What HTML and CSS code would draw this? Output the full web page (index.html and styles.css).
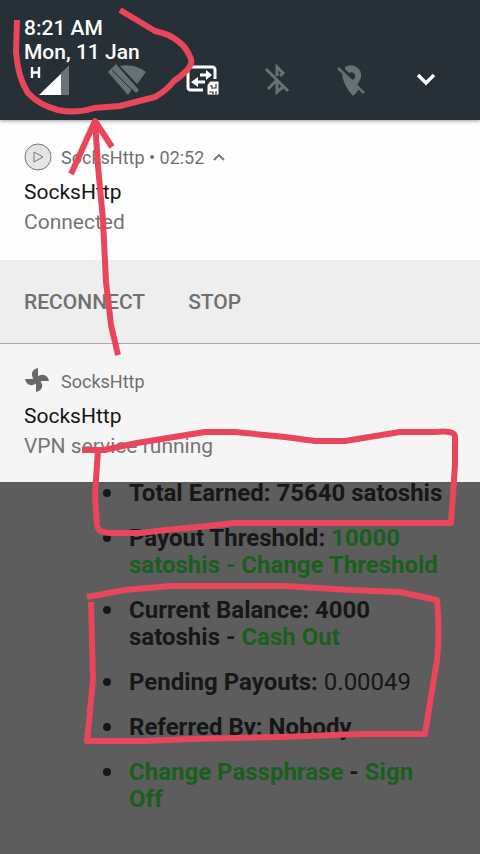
FILE: index.html
```html
<!DOCTYPE html>
<html lang="en">
<head>
<meta charset="utf-8">
<meta name="viewport" content="width=device-width, initial-scale=1">
<title>Notifications</title>
<link rel="stylesheet" href="styles.css">
</head>
<body>
<div class="screen">
  <div class="shade">
    <header class="status">
      <div class="clock">8:21 AM</div>
      <div class="clock">Mon, 11 Jan</div>
      <div class="tiles">
        <button class="tile" aria-label="Mobile signal">
          <svg viewBox="0 0 40 32"><path d="M5 31 35 2V31z" fill="#fff"/><path d="M27 9 35 2V31h-8z" fill="#6c7276"/><path d="M-2 3v11M5 3v11M-2 8.500h7" stroke="#fff" stroke-width="2.4"/></svg>
        </button>
        <button class="tile" aria-label="Wi-Fi off">
          <svg viewBox="0 0 40 32"><path d="M12 2Q26-1 38 8L29 20zM0 8 8 0 31 26 28 29 24 25 20 31z" fill="#667075"/><path d="M4 6 25 27" stroke="#263036" stroke-width="1"/></svg>
        </button>
        <button class="tile" aria-label="Mobile data">
          <svg viewBox="0 0 40 32" fill="none" stroke="#fff"><path d="M20 26H8q-3 0-3-3V6q0-3 3-3h21q3 0 3 3v9" stroke-width="3"/><path d="M17 11h7M14 18h8" stroke-width="3"/><path d="m23 6 6 5-6 5zM15 13l-7 5 7 5z" fill="#fff" stroke="none"/><path d="M24 21l3-4h9v14H24z" fill="#fff" stroke="#263036" stroke-width="1"/><path d="M27 22h2v3m4-5v4h-3M26 28h4v2m3-3v3" stroke="#263036" stroke-width="1.2"/></svg>
        </button>
        <button class="tile" aria-label="Bluetooth off">
          <svg viewBox="0 0 40 32" fill="none" stroke="#667075" stroke-width="3"><path d="M9 5 31 27M11 25l8-8M20 12V3l6 6-3 3M20 18v10l6-5"/></svg>
        </button>
        <button class="tile" aria-label="Location off">
          <svg viewBox="0 0 40 32"><path fill-rule="evenodd" d="M13 3Q20-1 26 4q5 5 2 12l-3 5-5-5q4-1 3-5-2-4-6-2l-4-4zM10 8l17 17q-3 5-6 7Q10 20 10 8z" fill="#667075"/><path d="M6 4 32 29" stroke="#667075" stroke-width="2.6"/></svg>
        </button>
        <button class="tile" aria-label="Expand quick settings">
          <svg viewBox="0 0 40 32"><path d="m12 11 8 8 8-8" fill="none" stroke="#fff" stroke-width="3.4"/></svg>
        </button>
      </div>
    </header>
    <main>
      <article class="note">
        <div class="app">
          <svg class="app-icon" viewBox="0 0 28 28"><circle cx="14" cy="14" r="13" fill="#e4e4e4" stroke="#777"/><path d="m10 9 9 5-9 5z" fill="none" stroke="#777"/></svg>
          <span>SocksHttp • 02:52</span>
          <svg class="caret" viewBox="0 0 12 8"><path d="m1 7 5-5 5 5" fill="none" stroke="#707070" stroke-width="1.8"/></svg>
        </div>
        <h2>SocksHttp</h2>
        <p>Connected</p>
      </article>
      <div class="actions">
        <button>RECONNECT</button>
        <button>STOP</button>
      </div>
      <article class="note note-muted">
        <div class="app">
          <svg class="app-icon" viewBox="0 0 28 28" fill="#686868"><path d="M13 15Q7 11 8 6 9 2 14 1V8q0 3 3 5z"/><path d="M13 15Q7 11 8 6 9 2 14 1V8q0 3 3 5z" transform="rotate(90 13 13)"/><path d="M13 15Q7 11 8 6 9 2 14 1V8q0 3 3 5z" transform="rotate(180 13 13)"/><path d="M13 15Q7 11 8 6 9 2 14 1V8q0 3 3 5z" transform="rotate(270 13 13)"/></svg>
          <span>SocksHttp</span>
        </div>
        <h2>SocksHttp</h2>
        <p>VPN service running</p>
      </article>
    </main>
  </div>
  <section class="account">
    <ul>
      <li>Total Earned: 75640 satoshis</li>
      <li>Payout Threshold: <a href="#">10000 satoshis - Change Threshold</a></li>
      <li>Current Balance: 4000 satoshis - <a href="#">Cash Out</a></li>
      <li>Pending Payouts: <span class="amount">0.00049</span></li>
      <li>Referred By: Nobody</li>
      <li><a href="#">Change Passphrase</a> - <a href="#">Sign Off</a></li>
    </ul>
  </section>
  <svg class="marker" viewBox="0 0 480 854" aria-hidden="true">
    <path d="M17 20 16 52Q18 78 28 93 39 105 58 110 76 114 94 108L120 106 155 97Q166 91 174 81 194 67 191 59 187 48 179 42 170 34 155 31L130 16 120 10"/>
    <path d="M71 174 95 121 112 147M95 121 98 166 103 220 106 282 111 325 118 355"/>
    <path d="M82 450H104L137 443 180 436 205 432H235L285 437 315 441H345L400 432H435Q454 430 455 436L455 465 451 523H235L198 527 165 530 140 533H110Q98 533 97 525L95 495 98 450"/>
    <path d="M87 597 125 590 170 586H285L350 590 400 592 437 600Q440 630 437 660L425 734H360L280 737 190 739 145 741H87L93 680 91 602"/>
  </svg>
</div>
</body>
</html>
```
FILE: styles.css
```css
* { box-sizing: border-box; }

body {
  margin: 0;
  font-family: Roboto, "Liberation Sans", sans-serif;
  background: #5d5d5d;
}

button {
  padding: 0;
  border: 0;
  background: none;
  font: inherit;
  color: inherit;
}

.screen {
  position: relative;
  min-height: 100vh;
  overflow: hidden;
}

.status {
  position: relative;
  padding: 16px 34px 24px 24px;
  background: #263036;
  box-shadow: 0 1px 4px #0006;
  color: #fff;
}

.clock {
  font-size: 21px;
  font-weight: 500;
  line-height: 24px;
}

.tiles {
  display: flex;
  justify-content: space-between;
  padding-left: 10px;
}

.tile { height: 32px; }

.tile svg {
  display: block;
  width: 40px;
  height: 32px;
  overflow: visible;
}

.note {
  padding: 20px 24px 23px;
  background: #fefefe;
}

.note-muted {
  padding-bottom: 21px;
  background: #f5f5f5;
}

.app {
  display: flex;
  align-items: center;
  gap: 9px;
  height: 34px;
  margin-bottom: 3px;
  font-size: 18px;
  color: #707070;
}

.app-icon {
  width: 28px;
  height: 28px;
}

.caret {
  width: 12px;
  height: 8px;
}

h2, p {
  margin: 0;
  font-size: 21px;
  font-weight: 400;
  line-height: 30px;
}

h2 { color: #161616; }
p { color: #757575; }

.actions {
  display: flex;
  gap: 43px;
  padding: 27px 24px 26px;
  border-bottom: 1px solid #aaa;
  background: #eee;
  font-size: 21px;
  font-weight: 500;
  line-height: 30px;
  color: #707070;
}

.shade {
  position: relative;
  z-index: 1;
}

.account {
  padding: 0 32px 24px 103px;
}

.account ul {
  margin: -2px 0 0;
  padding: 0;
  list-style: none;
  font-size: 24px;
  font-weight: 700;
  line-height: 27px;
  color: #171717;
}

.account li {
  position: relative;
  padding-left: 26px;
}

.account li::before {
  content: "";
  position: absolute;
  top: 9px;
  left: 0;
  width: 8px;
  height: 8px;
  border-radius: 50%;
  background: #171717;
}

.account li + li { margin-top: 18px; }

.account a {
  color: #1a5f1d;
  text-decoration: none;
}

.amount { font-weight: 400; }

.marker {
  position: absolute;
  z-index: 2;
  top: 0;
  left: 0;
  width: 100%;
  fill: none;
  stroke: #e9465b;
  stroke-width: 6;
  stroke-linejoin: round;
  pointer-events: none;
}
```
